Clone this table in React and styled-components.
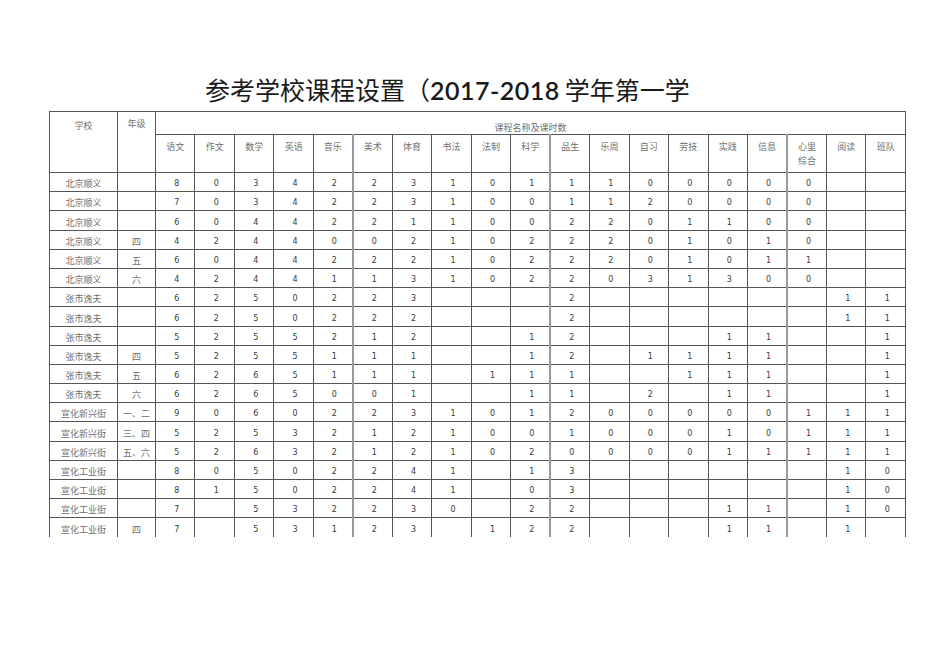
import React from "react";
import styled, { createGlobalStyle } from "styled-components";

const Global = createGlobalStyle`
  html, body { margin: 0; padding: 0; background: #fff; }
  body { font-family: "Noto Sans CJK SC", sans-serif; }
`;

const Page = styled.div`
  width: 950px;
  height: 672px;
  overflow: hidden;
  background: #fff;
  padding-top: 71px;
  box-sizing: border-box;
`;

const Title = styled.h1`
  margin: 0 0 0 205px;
  height: 40px;
  font-family: "Noto Sans CJK SC", sans-serif;
  font-weight: 400;
  font-size: 25px;
  line-height: 37px;
  color: #1a1a1a;
  white-space: nowrap;
`;

const Digits = styled.span`
  font-family: "Lato", "Noto Sans CJK SC", sans-serif;
  font-weight: 600;
  font-size: 25px;
  letter-spacing: 0.5px;
  margin: 0 5px 0 0;
`;

const Table = styled.table`
  margin-left: 49px;
  width: 857px;
  border-collapse: collapse;
  table-layout: fixed;
  border: 1px solid #555;
  border-bottom: none;
`;

const Cell = styled.td`
  border: 1px solid #555;
  border-right: ${(p) => (p.$thick ? "2px solid #9a9a9a" : "1px solid #555")};
  padding: 0;
  text-align: center;
  color: #707070;
`;

const HeadCell = styled(Cell)`
  vertical-align: top;
  font-size: 9px;
  line-height: 12px;
  padding-top: ${(p) => p.$pt || 8}px;
`;

const SubjectCell = styled(Cell)`
  vertical-align: top;
  font-size: 9px;
  line-height: 14px;
  padding-top: 5px;
`;

const HeadRow = styled.tr`
  height: ${(p) => p.$h}px;
`;

const DataRow = styled.tr`
  height: 19.2px;
  &:last-child td { border-bottom: none; }
`;

const NameCell = styled(Cell)`
  vertical-align: bottom;
  font-size: 9px;
  line-height: 12px;
  padding-bottom: 1px;
`;

const NumCell = styled(Cell)`
  vertical-align: bottom;
  font-family: "DejaVu Sans", sans-serif;
  font-size: 8px;
  line-height: 11px;
  padding-bottom: 2px;
  padding-left: 3px;
  color: #3a3a3a;
`;

const subjects = [
  "语文", "作文", "数学", "英语", "音乐", "美术", "体育", "书法", "法制", "科学",
  "品生", "乐周", "自习", "劳技", "实践", "信息", "心里\n综合", "阅读", "班队",
];
const thickCols = new Set([4, 9, 15]);

const rows = [
  ["北京顺义", "", "8 0 3 4 2 2 3 1 0 1 1 1 0 0 0 0 0 _ _"],
  ["北京顺义", "", "7 0 3 4 2 2 3 1 0 0 1 1 2 0 0 0 0 _ _"],
  ["北京顺义", "", "6 0 4 4 2 2 1 1 0 0 2 2 0 1 1 0 0 _ _"],
  ["北京顺义", "四", "4 2 4 4 0 0 2 1 0 2 2 2 0 1 0 1 0 _ _"],
  ["北京顺义", "五", "6 0 4 4 2 2 2 1 0 2 2 2 0 1 0 1 1 _ _"],
  ["北京顺义", "六", "4 2 4 4 1 1 3 1 0 2 2 0 3 1 3 0 0 _ _"],
  ["张市逸夫", "", "6 2 5 0 2 2 3 _ _ _ 2 _ _ _ _ _ _ 1 1"],
  ["张市逸夫", "", "6 2 5 0 2 2 2 _ _ _ 2 _ _ _ _ _ _ 1 1"],
  ["张市逸夫", "", "5 2 5 5 2 1 2 _ _ 1 2 _ _ _ 1 1 _ _ 1"],
  ["张市逸夫", "四", "5 2 5 5 1 1 1 _ _ 1 2 _ 1 1 1 1 _ _ 1"],
  ["张市逸夫", "五", "6 2 6 5 1 1 1 _ 1 1 1 _ _ 1 1 1 _ _ 1"],
  ["张市逸夫", "六", "6 2 6 5 0 0 1 _ _ 1 1 _ 2 _ 1 1 _ _ 1"],
  ["宣化新兴街", "一、二", "9 0 6 0 2 2 3 1 0 1 2 0 0 0 0 0 1 1 1"],
  ["宣化新兴街", "三、四", "5 2 5 3 2 1 2 1 0 0 1 0 0 0 1 0 1 1 1"],
  ["宣化新兴街", "五、六", "5 2 6 3 2 1 2 1 0 2 0 0 0 0 1 1 1 1 1"],
  ["宣化工业街", "", "8 0 5 0 2 2 4 1 _ 1 3 _ _ _ _ _ _ 1 0"],
  ["宣化工业街", "", "8 1 5 0 2 2 4 1 _ 0 3 _ _ _ _ _ _ 1 0"],
  ["宣化工业街", "", "7 _ 5 3 2 2 3 0 _ 2 2 _ _ _ 1 1 _ 1 0"],
  ["宣化工业街", "四", "7 _ 5 3 1 2 3 _ 1 2 2 _ _ _ 1 1 _ 1 _"],
];

export default function App() {
  return (
    <>
      <Global />
      <Page>
        <Title>
          参考学校课程设置（<Digits>2017-2018</Digits>学年第一学
        </Title>
        <Table>
          <colgroup>
            <col style={{ width: 68 }} />
            <col style={{ width: 38 }} />
            {subjects.map((s, i) => (
              <col key={i} />
            ))}
          </colgroup>
          <thead>
            <HeadRow $h={20}>
              <HeadCell rowSpan={2} $pt={8}>学校</HeadCell>
              <HeadCell rowSpan={2} $pt={6}>年级</HeadCell>
              <HeadCell colSpan={19} $pt={10}>课程名称及课时数</HeadCell>
            </HeadRow>
            <HeadRow $h={38}>
              {subjects.map((s, i) => (
                <SubjectCell key={i} $thick={thickCols.has(i)}>
                  {s.split("\n").map((l, j) => (
                    <div key={j}>{l}</div>
                  ))}
                </SubjectCell>
              ))}
            </HeadRow>
          </thead>
          <tbody>
            {rows.map(([school, grade, vals], r) => (
              <DataRow key={r}>
                <NameCell>{school}</NameCell>
                <NameCell>{grade}</NameCell>
                {vals.split(" ").map((v, i) => (
                  <NumCell key={i} $thick={thickCols.has(i)}>
                    {v === "_" ? "" : v}
                  </NumCell>
                ))}
              </DataRow>
            ))}
          </tbody>
        </Table>
      </Page>
    </>
  );
}
